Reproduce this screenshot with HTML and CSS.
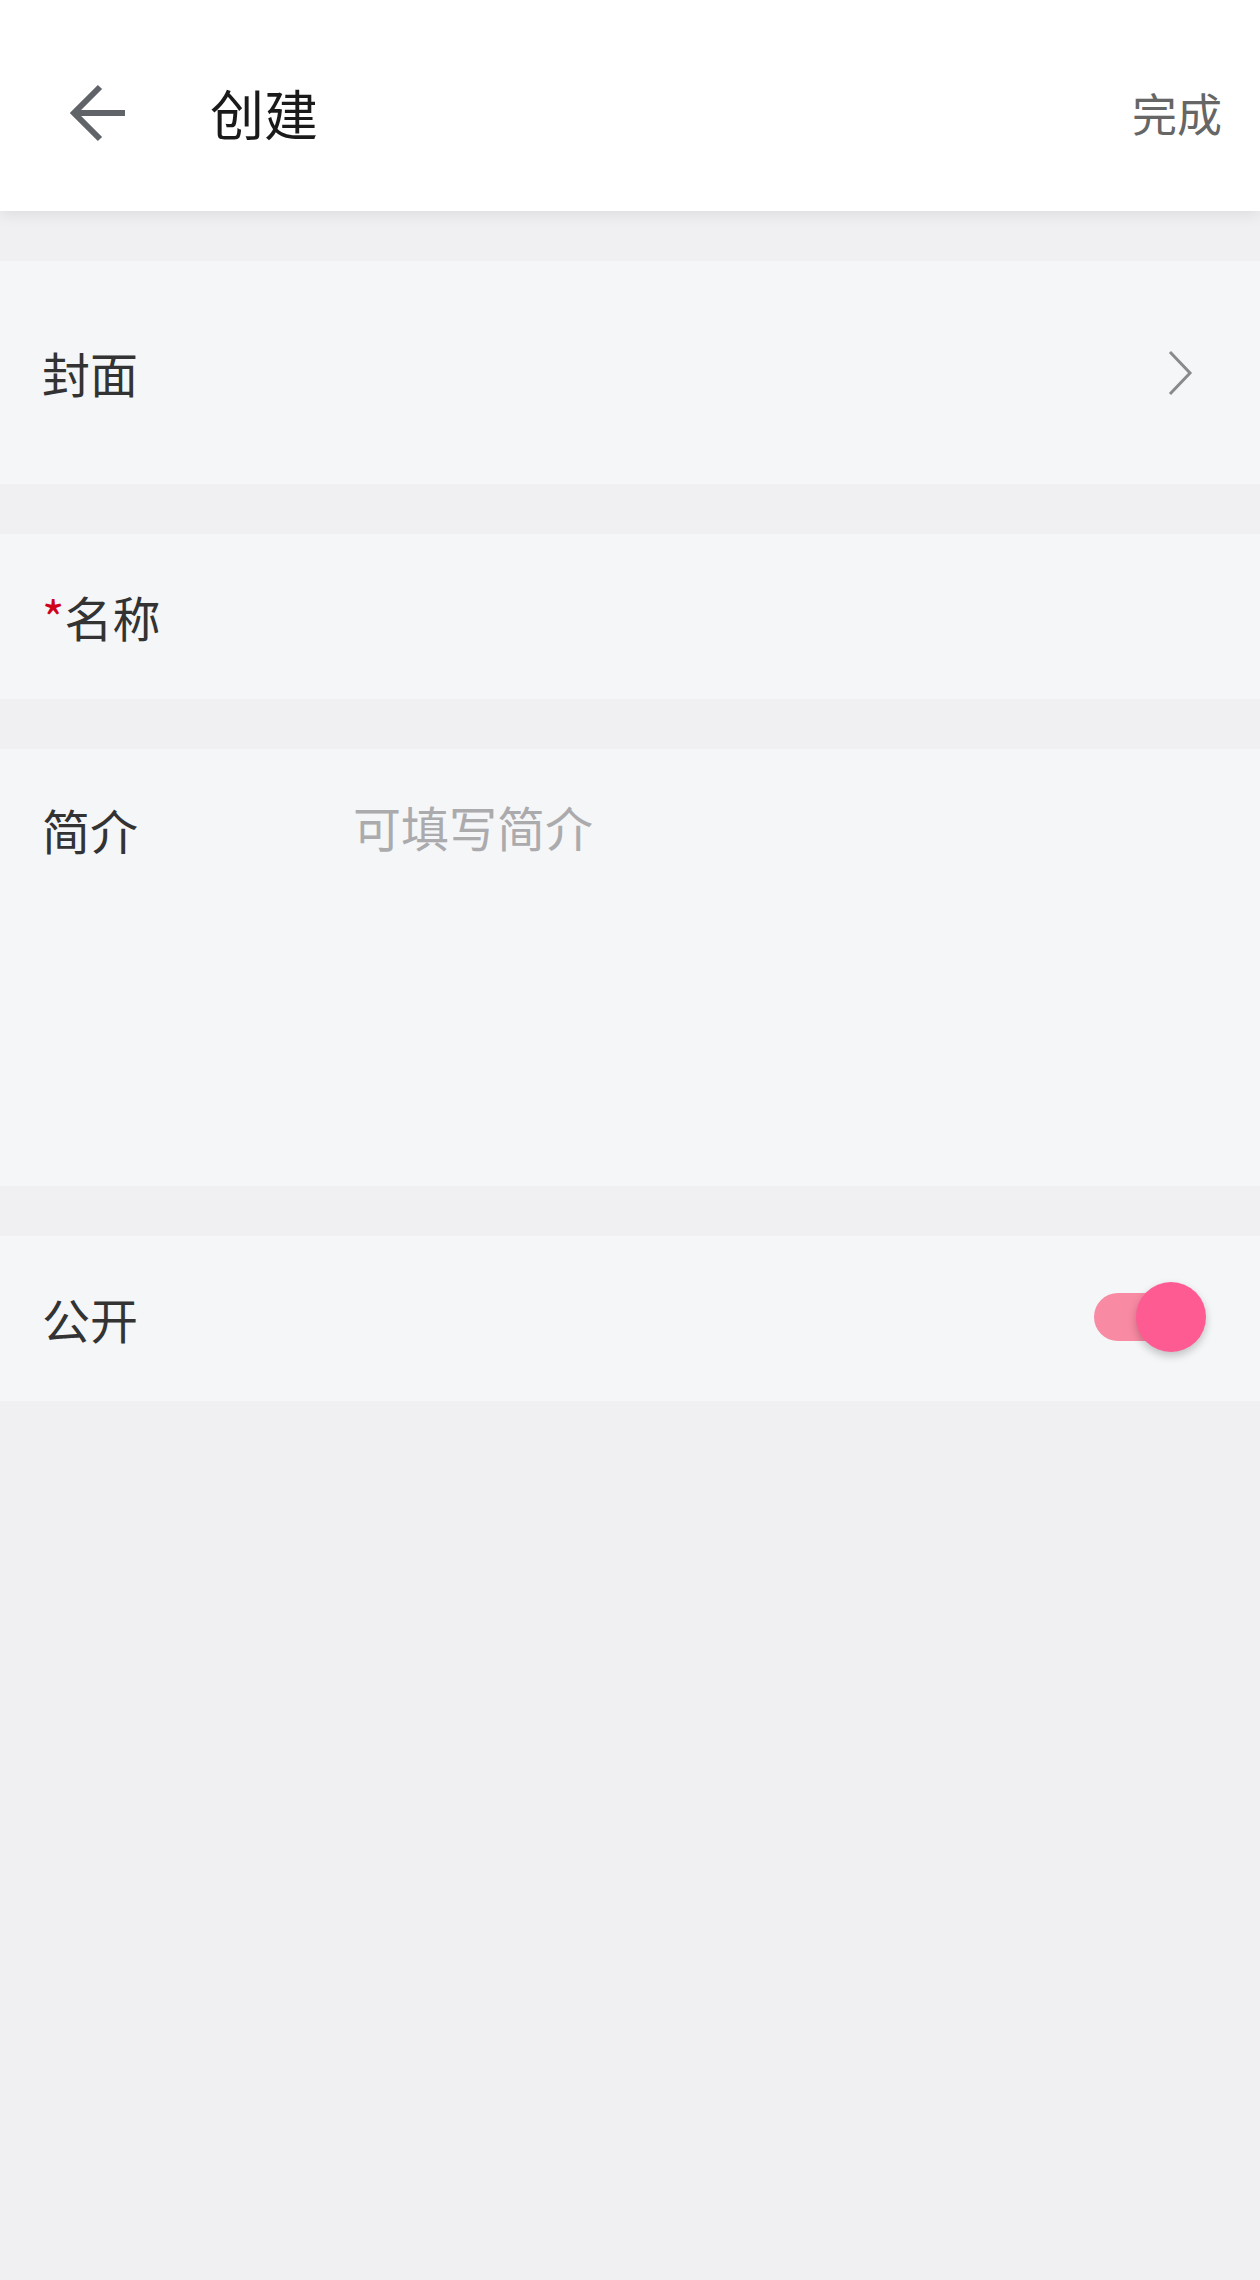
FILE: index.html
```html
<!DOCTYPE html>
<html lang="zh-CN">
<head>
<meta charset="utf-8">
<title>创建</title>
<link rel="stylesheet" href="styles.css">
</head>
<body>
<div class="page">
  <header class="topbar">
    <button class="back" aria-label="返回">
      <svg class="back-icon" viewBox="0 0 64 64" width="64" height="64">
        <path d="M59 32 H8 M34 6 L8 32 L34 58" fill="none" stroke="#606368" stroke-width="6" stroke-linejoin="miter"/>
      </svg>
    </button>
    <h1 class="title">创建</h1>
    <span class="done">完成</span>
  </header>

  <main class="form">
    <section class="row row-cover">
      <span class="label">封面</span>
      <svg class="chevron" viewBox="0 0 30 48" width="30" height="48">
        <path d="M4 3 L24 24 L4 45" fill="none" stroke="#8a8a8d" stroke-width="3"/>
      </svg>
    </section>

    <section class="row row-name">
      <span class="label"><span class="required">*</span>名称</span>
      <span class="field"></span>
    </section>

    <section class="row row-intro">
      <span class="label">简介</span>
      <span class="field placeholder">可填写简介</span>
    </section>

    <section class="row row-public">
      <span class="label">公开</span>
      <span class="toggle" role="switch" aria-checked="true">
        <span class="track"></span>
        <span class="knob"></span>
      </span>
    </section>
  </main>
</div>
</body>
</html>
```

FILE: styles.css
```css
* {
  box-sizing: border-box;
}

html, body {
  margin: 0;
  padding: 0;
}

body {
  background: #f0f0f2;
  font-family: "Noto Sans CJK SC", "Noto Sans", sans-serif;
  color: #333333;
}

.page {
  width: 1260px;
  min-height: 2280px;
  background: #f0f0f2;
}

.topbar {
  height: 211px;
  background: #ffffff;
  display: flex;
  align-items: center;
  padding: 15px 38px 0 66px;
  box-shadow: 0 4px 14px rgba(0, 0, 0, 0.08);
  position: relative;
  z-index: 1;
}

.back {
  width: 64px;
  height: 64px;
  padding: 0;
  margin: 0;
  border: 0;
  background: transparent;
  display: flex;
}

.back-icon {
  display: block;
}

.title {
  margin: 0 0 0 80px;
  font-size: 54px;
  font-weight: 400;
  line-height: 1.2;
  color: #1a1a1a;
  flex: 1;
}

.done {
  font-size: 45px;
  line-height: 1.2;
  color: #666666;
}

.form {
  display: flex;
  flex-direction: column;
  gap: 50px;
  padding-top: 50px;
}

.row {
  background: #f5f6f8;
  display: flex;
  align-items: center;
  padding-left: 42px;
}

.label {
  font-size: 48px;
  line-height: 1.4;
  color: #333333;
  flex: 0 0 311px;
}

.required {
  color: #d0021b;
}

.field {
  flex: 1;
}

.row-cover {
  height: 223px;
  justify-content: space-between;
  padding-right: 64px;
}

.row-cover .label {
  flex: 0 0 auto;
}

.chevron {
  display: block;
}

.row-name {
  height: 165px;
}

.row-intro {
  height: 437px;
  align-items: flex-start;
  padding-top: 47px;
}

.placeholder {
  font-size: 48px;
  line-height: 1.4;
  color: #ababad;
  margin-top: -3px;
}

.row-public {
  height: 165px;
  justify-content: space-between;
  padding-right: 54px;
}

.row-public .label {
  flex: 0 0 auto;
}

.toggle {
  position: relative;
  width: 112px;
  height: 70px;
  margin-top: -4px;
}

.track {
  position: absolute;
  left: 0;
  top: 11px;
  width: 96px;
  height: 48px;
  border-radius: 24px;
  background: #f98aa3;
}

.knob {
  position: absolute;
  right: 0;
  top: 0;
  width: 70px;
  height: 70px;
  border-radius: 50%;
  background: #ff5b93;
  box-shadow: 0 4px 8px rgba(0, 0, 0, 0.22);
}
```
